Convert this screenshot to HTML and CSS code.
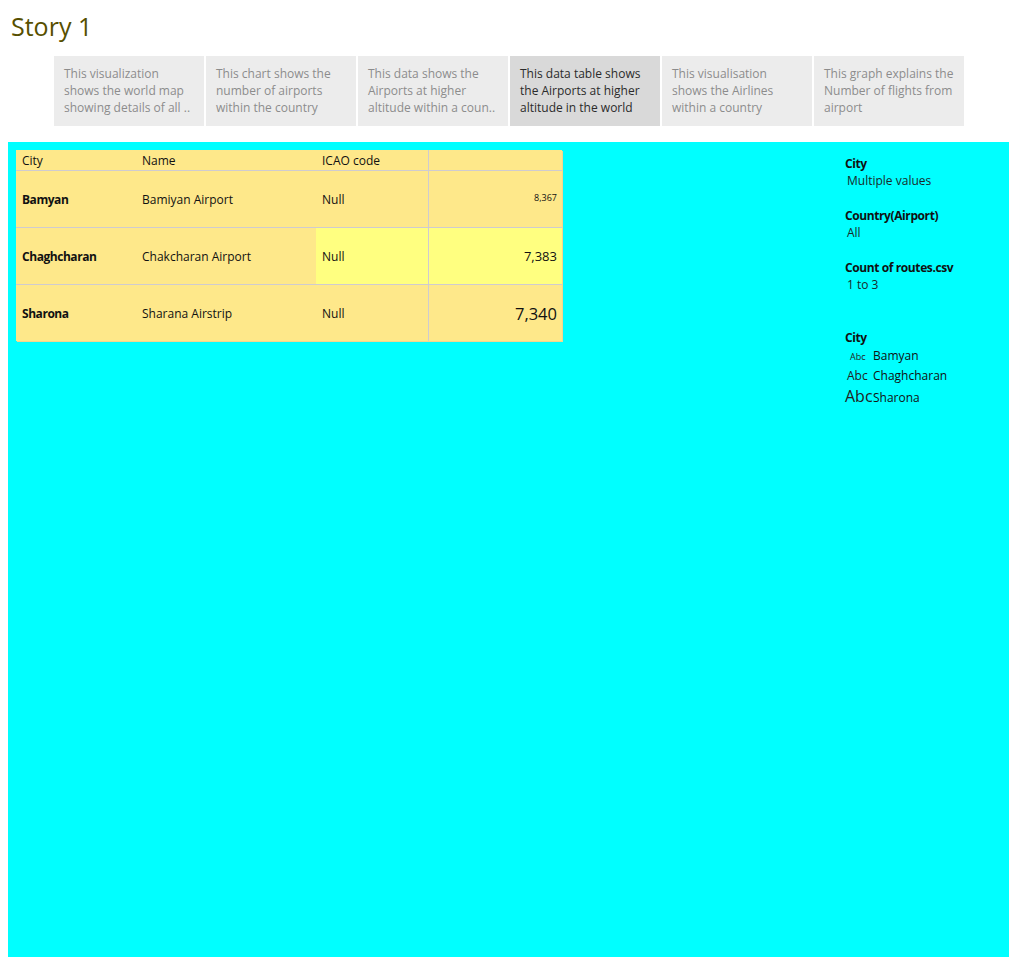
FILE: index.html
```html
<!DOCTYPE html>
<html>
<head>
<meta charset="utf-8">
<link rel="stylesheet" href="styles.css">
</head>
<body>
<div class="title">Story 1</div>
<div class="tabs">
  <div class="tab">This visualization<br>shows the world map<br>showing details of all ..</div>
  <div class="tab">This chart shows the<br>number of airports<br>within the country</div>
  <div class="tab">This data shows the<br>Airports at higher<br>altitude within a coun..</div>
  <div class="tab active">This data table shows<br>the Airports at higher<br>altitude in the world</div>
  <div class="tab">This visualisation<br>shows the Airlines<br>within a country</div>
  <div class="tab">This graph explains the<br>Number of flights from<br>airport</div>
</div>
<div class="canvas">
  <div class="table">
    <div class="row head">
      <div class="c c1">City</div>
      <div class="c c2">Name</div>
      <div class="c c3">ICAO code</div>
      <div class="c c4"></div>
    </div>
    <div class="row">
      <div class="c c1 b">Bamyan</div>
      <div class="c c2">Bamiyan Airport</div>
      <div class="c c3">Null</div>
      <div class="c c4 n1">8,367</div>
    </div>
    <div class="row">
      <div class="c c1 b">Chaghcharan</div>
      <div class="c c2">Chakcharan Airport</div>
      <div class="c c3 hl">Null</div>
      <div class="c c4 hl n2">7,383</div>
    </div>
    <div class="row last">
      <div class="c c1 b">Sharona</div>
      <div class="c c2">Sharana Airstrip</div>
      <div class="c c3">Null</div>
      <div class="c c4 n3">7,340</div>
    </div>
  </div>
  <div class="panel">
    <div class="filter">
      <div class="fh">City</div>
      <div class="fv">Multiple values</div>
    </div>
    <div class="filter">
      <div class="fh">Country(Airport)</div>
      <div class="fv">All</div>
    </div>
    <div class="filter">
      <div class="fh">Count of routes.csv</div>
      <div class="fv">1 to 3</div>
    </div>
    <div class="legend">
      <div class="fh lh">City</div>
      <div class="li"><span class="abc a1">Abc</span><span>Bamyan</span></div>
      <div class="li"><span class="abc a2">Abc</span><span>Chaghcharan</span></div>
      <div class="li"><span class="abc a3">Abc</span><span>Sharona</span></div>
    </div>
  </div>
</div>
</body>
</html>
```

FILE: styles.css
```css
* { box-sizing: border-box; }
html, body { margin: 0; padding: 0; background: #fff; }
body {
  width: 1016px;
  height: 964px;
  font-family: "Open Sans", Arial, sans-serif;
  font-size: 12px;
  color: #222;
  overflow: hidden;
}
.title {
  font-size: 25px;
  color: #574f00;
  padding: 10px 0 0 11px;
  height: 56px;
  line-height: 32px;
}
.tabs {
  display: flex;
  gap: 2px;
  margin-left: 54px;
  height: 70px;
}
.tab {
  width: 150px;
  height: 70px;
  background: #ececec;
  color: #8c8c8c;
  font-size: 12px;
  line-height: 17px;
  white-space: nowrap;
  overflow: hidden;
  padding: 9px 4px 0 10px;
}
.tab.active {
  background: #d9d9d9;
  color: #2b2b2b;
}
.canvas {
  margin: 16px 0 0 8px;
  width: 1001px;
  height: 815px;
  background: #00ffff;
  padding: 8px;
  display: flex;
  justify-content: space-between;
}
.table {
  width: 546px;
  height: 191px;
  background: #fee88a;
  box-shadow: 1px 1px 0 #f2d690;
  display: flex;
  flex-direction: column;
}
.row {
  display: flex;
  height: 57px;
  border-bottom: 1px solid #cfcbd0;
}
.row.head { height: 21px; }
.row.last { border-bottom: none; height: 56px; }
.c {
  display: flex;
  align-items: center;
  font-size: 12px;
  color: #111;
}
.c1 { width: 120px; padding-left: 6px; }
.c2 { width: 180px; padding-left: 6px; }
.c3 { width: 112px; padding-left: 6px; }
.c4 {
  width: 134px;
  border-left: 1px solid #cfcbd0;
  justify-content: flex-end;
  padding-right: 5px;
}
.b { font-weight: bold; font-size: 12px; letter-spacing: -0.45px; }
.hl { background: #ffff80; }
.n1 { font-size: 9px; align-items: flex-start; padding-top: 20px; }
.n2 { font-size: 13px; }
.n3 { font-size: 16.5px; }
.panel {
  width: 156px;
  padding-top: 5px;
  display: flex;
  flex-direction: column;
}
.filter { height: 52px; }
.fh {
  font-weight: bold;
  font-size: 12px;
  letter-spacing: -0.4px;
  line-height: 17px;
  color: #111;
}
.fv {
  padding-left: 2px;
  line-height: 18px;
  color: #1a2a2a;
}
.legend { margin-top: 18px; }
.lh { margin-bottom: 0; }
.li {
  display: flex;
  align-items: baseline;
  height: 20px;
  line-height: 20px;
  color: #111;
}
.abc {
  width: 28px;
  flex: none;
  color: #222;
}
.a1 { font-size: 9px; padding-left: 5px; }
.a2 { font-size: 12px; padding-left: 2px; }
.a3 { font-size: 16px; }
```
